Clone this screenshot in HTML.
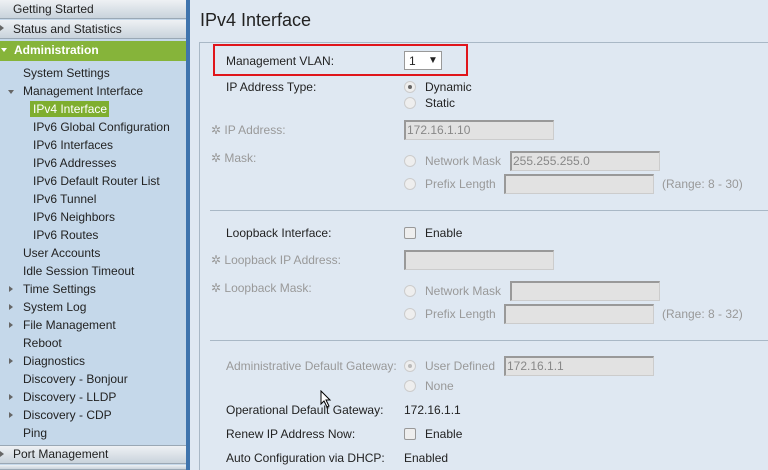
<!DOCTYPE html>
<html style="width:768px;height:470px;overflow:hidden"><head><style>
*{margin:0;padding:0;box-sizing:border-box}
body{width:768px;height:470px;overflow:hidden;font-family:"Liberation Sans",sans-serif;font-size:12px;color:#222;position:relative;background:#dfe8f2}
.sb{position:absolute;left:0;top:0;width:186px;height:470px;background:#c5d8ea}
.bar{position:absolute;left:186px;top:0;width:4px;height:470px;background:#3f74ad}
.t{position:absolute;white-space:nowrap;line-height:14px}
.hdr{position:absolute;left:0;width:186px;height:19px;background:linear-gradient(#eef1f4,#c9d3dc);border-bottom:1px solid #9aa8b5}
.adm{position:absolute;left:0;top:41px;width:186px;height:20px;background:#86b43a}
.sel{position:absolute;left:30px;top:101px;width:79px;height:16px;background:#7fae2f}
.tri{position:absolute;width:0;height:0}
.g{color:#999}
.in{position:absolute;height:20px;background:#e2e2e2;border:1px solid #ccc;border-top:2px solid #999;border-left:2px solid #999;color:#888;padding-left:1px;line-height:16px}
.r{position:absolute;width:12px;height:12px;border-radius:50%;border:1px solid #ccc;background:#eee}
.cb{position:absolute;width:12px;height:12px;border:1px solid #999;background:#eee;border-radius:2px}
.hl{position:absolute;left:210px;width:558px;height:1px;background:#a9b8c6}
</style></head><body>
<div class="sb"></div>
<div class="hdr" style="top:0"></div>
<div class="t" style="left:13px;top:2px">Getting Started</div>
<div class="hdr" style="top:20px"></div>
<div class="tri" style="left:0;top:25px;border-left:4px solid #666;border-top:3px solid transparent;border-bottom:3px solid transparent"></div>
<div class="t" style="left:13px;top:22px">Status and Statistics</div>
<div class="adm"></div>
<div class="tri" style="left:1px;top:48px;border-top:4px solid #fff;border-left:3px solid transparent;border-right:3px solid transparent"></div>
<div class="t" style="left:14px;top:43px;color:#fff;font-weight:bold">Administration</div>
<div class="t" style="left:23px;top:66px">System Settings</div>
<div class="tri" style="left:8px;top:90px;border-top:4px solid #666;border-left:3px solid transparent;border-right:3px solid transparent"></div>
<div class="t" style="left:23px;top:84px">Management Interface</div>
<div class="sel"></div>
<div class="t" style="left:33px;top:102px;color:#fff">IPv4 Interface</div>
<div class="t" style="left:33px;top:120px">IPv6 Global Configuration</div>
<div class="t" style="left:33px;top:138px">IPv6 Interfaces</div>
<div class="t" style="left:33px;top:156px">IPv6 Addresses</div>
<div class="t" style="left:33px;top:174px">IPv6 Default Router List</div>
<div class="t" style="left:33px;top:192px">IPv6 Tunnel</div>
<div class="t" style="left:33px;top:210px">IPv6 Neighbors</div>
<div class="t" style="left:33px;top:228px">IPv6 Routes</div>
<div class="t" style="left:23px;top:246px">User Accounts</div>
<div class="t" style="left:23px;top:264px">Idle Session Timeout</div>
<div class="tri" style="left:9px;top:286px;border-left:4px solid #666;border-top:3px solid transparent;border-bottom:3px solid transparent"></div>
<div class="t" style="left:23px;top:282px">Time Settings</div>
<div class="tri" style="left:9px;top:304px;border-left:4px solid #666;border-top:3px solid transparent;border-bottom:3px solid transparent"></div>
<div class="t" style="left:23px;top:300px">System Log</div>
<div class="tri" style="left:9px;top:322px;border-left:4px solid #666;border-top:3px solid transparent;border-bottom:3px solid transparent"></div>
<div class="t" style="left:23px;top:318px">File Management</div>
<div class="t" style="left:23px;top:336px">Reboot</div>
<div class="tri" style="left:9px;top:358px;border-left:4px solid #666;border-top:3px solid transparent;border-bottom:3px solid transparent"></div>
<div class="t" style="left:23px;top:354px">Diagnostics</div>
<div class="t" style="left:23px;top:372px">Discovery - Bonjour</div>
<div class="tri" style="left:9px;top:394px;border-left:4px solid #666;border-top:3px solid transparent;border-bottom:3px solid transparent"></div>
<div class="t" style="left:23px;top:390px">Discovery - LLDP</div>
<div class="tri" style="left:9px;top:412px;border-left:4px solid #666;border-top:3px solid transparent;border-bottom:3px solid transparent"></div>
<div class="t" style="left:23px;top:408px">Discovery - CDP</div>
<div class="t" style="left:23px;top:426px">Ping</div>
<div class="hdr" style="top:445px;border-top:1px solid #9aa8b5"></div>
<div class="tri" style="left:0;top:451px;border-left:4px solid #666;border-top:3px solid transparent;border-bottom:3px solid transparent"></div>
<div class="t" style="left:13px;top:447px">Port Management</div>
<div class="hdr" style="top:465px;height:5px"></div>
<div class="bar"></div>

<div class="t" style="left:200px;top:10px;font-size:18px;line-height:20px;color:#222">IPv4 Interface</div>
<div style="position:absolute;left:199px;top:42px;width:569px;height:428px;border:1px solid #a9b8c6;border-right:none;border-bottom:none;background:#dfe8f2"></div>
<div style="position:absolute;left:213px;top:44px;width:255px;height:32px;border:2px solid #e0151b"></div>
<div class="t" style="left:226px;top:54px">Management VLAN:</div>
<div style="position:absolute;left:404px;top:51px;width:38px;height:19px;background:#fff;border:1px solid #999"></div>
<div class="t" style="left:409px;top:54px">1</div>
<div class="t" style="left:428px;top:54px;font-size:10px">▼</div>
<div class="t" style="left:226px;top:80px">IP Address Type:</div>
<div class="r" style="left:404px;top:81px"></div><div style="position:absolute;left:408px;top:85px;width:4px;height:4px;border-radius:50%;background:#666"></div>
<div class="t" style="left:425px;top:80px">Dynamic</div>
<div class="r" style="left:404px;top:97px"></div>
<div class="t" style="left:425px;top:96px">Static</div>
<div class="t g" style="left:211px;top:123px">✲ IP Address:</div>
<div class="in" style="left:404px;top:120px;width:150px">172.16.1.10</div>
<div class="t g" style="left:211px;top:151px">✲ Mask:</div>
<div class="r" style="left:404px;top:155px"></div>
<div class="t g" style="left:425px;top:154px">Network Mask</div>
<div class="in" style="left:510px;top:151px;width:150px">255.255.255.0</div>
<div class="r" style="left:404px;top:178px"></div>
<div class="t g" style="left:425px;top:177px">Prefix Length</div>
<div class="in" style="left:504px;top:174px;width:150px"></div>
<div class="t g" style="left:662px;top:177px">(Range: 8 - 30)</div>
<div class="hl" style="top:210px"></div>
<div class="t" style="left:226px;top:226px">Loopback Interface:</div>
<div class="cb" style="left:404px;top:227px"></div>
<div class="t" style="left:425px;top:226px">Enable</div>
<div class="t g" style="left:211px;top:253px">✲ Loopback IP Address:</div>
<div class="in" style="left:404px;top:250px;width:150px"></div>
<div class="t g" style="left:211px;top:281px">✲ Loopback Mask:</div>
<div class="r" style="left:404px;top:285px"></div>
<div class="t g" style="left:425px;top:284px">Network Mask</div>
<div class="in" style="left:510px;top:281px;width:150px"></div>
<div class="r" style="left:404px;top:308px"></div>
<div class="t g" style="left:425px;top:307px">Prefix Length</div>
<div class="in" style="left:504px;top:304px;width:150px"></div>
<div class="t g" style="left:662px;top:307px">(Range: 8 - 32)</div>
<div class="hl" style="top:340px"></div>
<div class="t g" style="left:226px;top:359px">Administrative Default Gateway:</div>
<div class="r" style="left:404px;top:360px"></div><div style="position:absolute;left:408px;top:364px;width:4px;height:4px;border-radius:50%;background:#bbb"></div>
<div class="t g" style="left:425px;top:359px">User Defined</div>
<div class="in" style="left:504px;top:356px;width:150px">172.16.1.1</div>
<div class="r" style="left:404px;top:380px"></div>
<div class="t g" style="left:425px;top:379px">None</div>
<div class="t" style="left:226px;top:403px">Operational Default Gateway:</div>
<div class="t" style="left:404px;top:403px">172.16.1.1</div>
<div class="t" style="left:226px;top:427px">Renew IP Address Now:</div>
<div class="cb" style="left:404px;top:428px"></div>
<div class="t" style="left:425px;top:427px">Enable</div>
<div class="t" style="left:226px;top:451px">Auto Configuration via DHCP:</div>
<div class="t" style="left:404px;top:451px">Enabled</div>
<svg style="position:absolute;left:320px;top:390px" width="12" height="18"><path d="M1 1 L1 14 L4 11 L7 17 L9 16 L6 10 L10 10 Z" fill="#fff" stroke="#000" stroke-width="1"/></svg>
</body></html>
